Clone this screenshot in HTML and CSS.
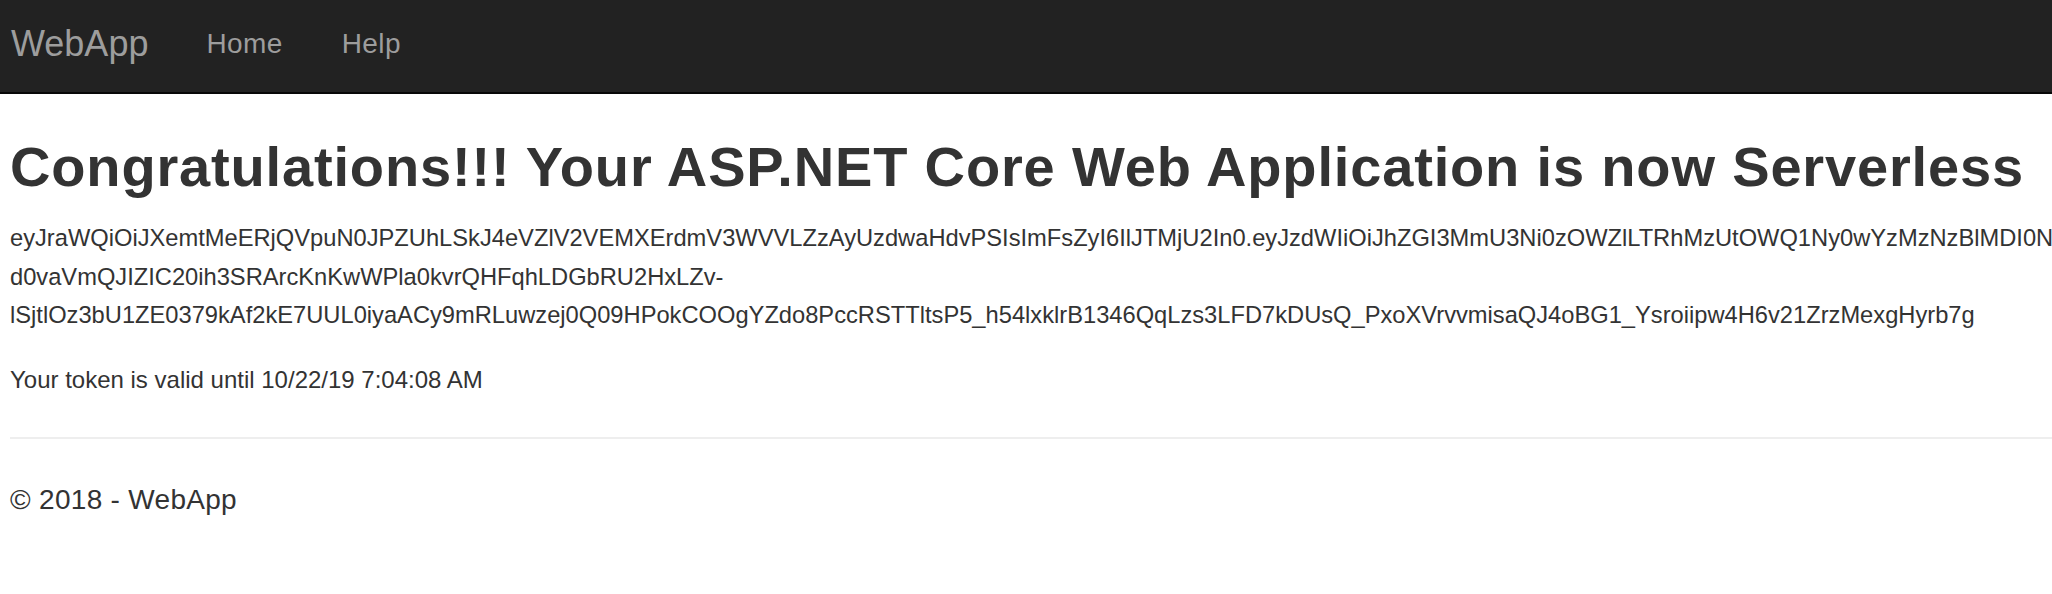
FILE: index.html
```html
<!DOCTYPE html>
<html lang="en">
<head>
<meta charset="utf-8">
<title>WebApp</title>
<link rel="stylesheet" href="styles.css">
</head>
<body>
<nav class="navbar">
  <a class="brand" href="#">WebApp</a>
  <ul class="nav-links">
    <li><a href="#">Home</a></li>
    <li><a href="#">Help</a></li>
  </ul>
</nav>
<main class="body-content">
  <h2 class="title">Congratulations!!! Your ASP.NET Core Web Application is now Serverless</h2>
  <p class="token">eyJraWQiOiJXemtMeERjQVpuN0JPZUhLSkJ4eVZlV2VEMXErdmV3WVVLZzAyUzdwaHdvPSIsImFsZyI6IlJTMjU2In0.eyJzdWIiOiJhZGI3MmU3Ni0zOWZlLTRhMzUtOWQ1Ny0wYzMzNzBlMDI0NmE1IiwiZXZlbnRfaWQiOiI5ZDE3YjQ1MmU3YzcxMWU4OGU0MmE5Y2IwNjZjMTQ1NSIsInRva2VuX3VzZSI6ImFjY2VzcyIsInNjb3BlIjoiYXdzLmNvZ25pdG8uc2lnbmluLnVzZXIuYWRtaW4iLCJhdXRoX3RpbWUiOjE1NDAxOTA2NDgsImV4cCI6MTU0MDE5NDI0OH0.W8fVZ2L8YbQx4kT9Jm3P-d0vaVmQJIZIC20ih3SRArcKnKwWPla0kvrQHFqhLDGbRU2HxLZv-lSjtlOz3bU1ZE0379kAf2kE7UUL0iyaACy9mRLuwzej0Q09HPokCOOgYZdo8PccRSTTltsP5_h54lxklrB1346QqLzs3LFD7kDUsQ_PxoXVrvvmisaQJ4oBG1_Ysroiipw4H6v21ZrzMexgHyrb7g</p>
  <p class="expiry">Your token is valid until 10/22/19 7:04:08 AM</p>
  <hr class="rule">
  <footer class="footer">
    <p>© 2018 - WebApp</p>
  </footer>
</main>
</body>
</html>
```
FILE: styles.css
```css
html, body {
  margin: 0;
  padding: 0;
  overflow: hidden;
  background: #fff;
}

body {
  font-family: "Liberation Sans", Arial, Helvetica, sans-serif;
  color: #333;
  width: 2052px;
}

.navbar {
  display: flex;
  align-items: center;
  gap: 58px;
  box-sizing: content-box;
  height: 87px;
  padding: 0 0 5px 11px;
  background: #222;
  border-bottom: 2px solid #080808;
}

.brand {
  font-size: 36px;
  color: #9d9d9d;
  text-decoration: none;
}

.nav-links {
  display: flex;
  gap: 59px;
  list-style: none;
  margin: 0;
  padding: 0;
}

.nav-links a {
  font-size: 28px;
  letter-spacing: 0.4px;
  color: #9d9d9d;
  text-decoration: none;
}

.body-content {
  padding-left: 10px;
}

.title {
  margin: 43px 0 22px;
  font-size: 56px;
  line-height: 60px;
  font-weight: bold;
  letter-spacing: 0.84px;
}

.token, .expiry {
  margin: 0 0 26px;
  font-size: 23.7px;
  line-height: 38.7px;
}

.expiry {
  font-size: 24px;
}

.rule {
  margin: 37px 0 0;
  border: 0;
  border-top: 2px solid #eee;
}

.footer p {
  margin: 41px 0 0;
  font-size: 28px;
  line-height: 40px;
  letter-spacing: 0.3px;
}
```
